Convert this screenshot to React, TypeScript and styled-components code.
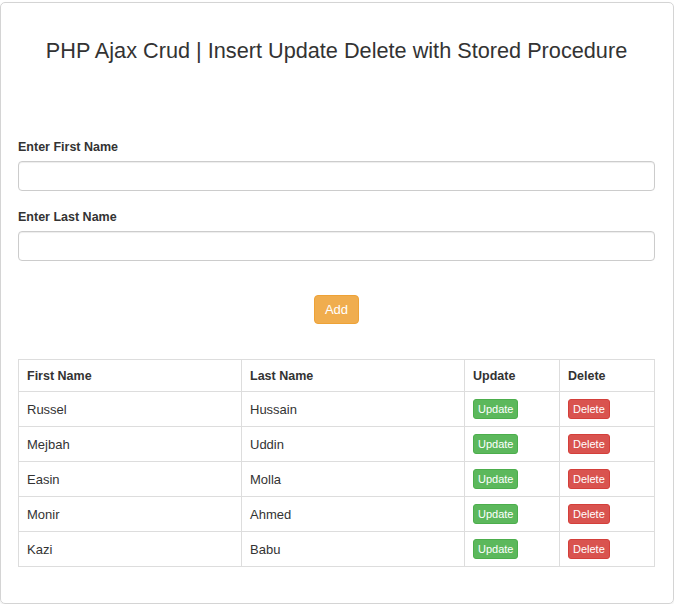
import React from 'react';
import { styled, createGlobalStyle } from 'styled-components';

const GlobalStyle = createGlobalStyle`
  html, body {
    margin: 0;
    padding: 0;
    background: #ffffff;
  }
  body {
    font-family: "Liberation Sans", Arial, sans-serif;
    font-size: 13px;
    color: #333333;
  }
  * {
    box-sizing: border-box;
  }
`;

const rows = [
  { first: 'Russel', last: 'Hussain' },
  { first: 'Mejbah', last: 'Uddin' },
  { first: 'Easin', last: 'Molla' },
  { first: 'Monir', last: 'Ahmed' },
  { first: 'Kazi', last: 'Babu' },
];

const App = () => {
  return (
    <>
      <GlobalStyle />
      <Panel>
        <Title>PHP Ajax Crud | Insert Update Delete with Stored Procedure</Title>

        <FormGroup>
          <Label>Enter First Name</Label>
          <Input type="text" />
        </FormGroup>
        <FormGroup>
          <Label>Enter Last Name</Label>
          <Input type="text" />
        </FormGroup>

        <ButtonRow>
          <AddBtn>Add</AddBtn>
        </ButtonRow>

        <Table>
          <thead>
            <tr>
              <Th>First Name</Th>
              <Th>Last Name</Th>
              <Th>Update</Th>
              <Th>Delete</Th>
            </tr>
          </thead>
          <tbody>
            {rows.map((r) => (
              <tr key={r.first}>
                <Td>{r.first}</Td>
                <Td>{r.last}</Td>
                <Td>
                  <SmallBtn $kind="update">Update</SmallBtn>
                </Td>
                <Td>
                  <SmallBtn $kind="delete">Delete</SmallBtn>
                </Td>
              </tr>
            ))}
          </tbody>
        </Table>
      </Panel>
    </>
  );
};

const Panel = styled.div`
  margin-top: 2px;
  width: 674px;
  height: 602px;
  border: 1px solid #d4d4d4;
  border-radius: 5px;
  box-shadow: 0 1px 2px rgba(0, 0, 0, 0.08);
  padding: 0 18px 0 17px;
`;

const Title = styled.h3`
  margin: 0;
  padding-top: 30px;
  height: 134px;
  font-size: 21.7px;
  font-weight: 400;
  line-height: 36px;
  text-align: center;
  color: #333333;
`;

const FormGroup = styled.div`
  margin-bottom: 17px;
`;

const Label = styled.label`
  display: block;
  font-weight: 700;
  font-size: 12.5px;
  line-height: 18px;
  margin-top: 1px;
  margin-bottom: 5px;
  color: #333333;
`;

const Input = styled.input`
  display: block;
  width: 100%;
  height: 30px;
  border: 1px solid #cccccc;
  border-radius: 4px;
  box-shadow: inset 0 1px 1px rgba(0, 0, 0, 0.075);
  outline: none;
`;

const ButtonRow = styled.div`
  display: flex;
  justify-content: center;
  margin-top: 34px;
  margin-bottom: 35px;
`;

const AddBtn = styled.button`
  width: 45px;
  height: 29px;
  padding: 0;
  background-color: #f0ad4e;
  border: 1px solid #eea236;
  border-radius: 4px;
  color: #ffffff;
  font-family: "Liberation Sans", Arial, sans-serif;
  font-size: 13px;
  cursor: pointer;
`;

const Table = styled.table`
  width: 637px;
  border-collapse: collapse;
  border: 1px solid #dddddd;
  table-layout: fixed;
`;

const Th = styled.th`
  height: 32px;
  padding: 0 8px;
  border: 1px solid #dddddd;
  text-align: left;
  font-weight: 700;
  font-size: 12.5px;
  color: #333333;

  &:nth-child(1),
  &:nth-child(2) {
    width: 223px;
  }
  &:nth-child(3) {
    width: 95px;
  }
`;

const Td = styled.td`
  height: 35px;
  padding: 0 8px;
  border: 1px solid #dddddd;
  font-size: 13px;
  color: #333333;
  vertical-align: middle;
`;

const SmallBtn = styled.button<{ $kind: 'update' | 'delete' }>`
  display: inline-block;
  vertical-align: middle;
  height: 20px;
  padding: 0 4px;
  border-radius: 3px;
  border: 1px solid ${(p) => (p.$kind === 'update' ? '#4cae4c' : '#d43f3a')};
  background-color: ${(p) => (p.$kind === 'update' ? '#5cb85c' : '#d9534f')};
  color: #ffffff;
  font-family: "Liberation Sans", Arial, sans-serif;
  font-size: 11px;
  font-weight: 400;
  cursor: pointer;
`;

export default App;
